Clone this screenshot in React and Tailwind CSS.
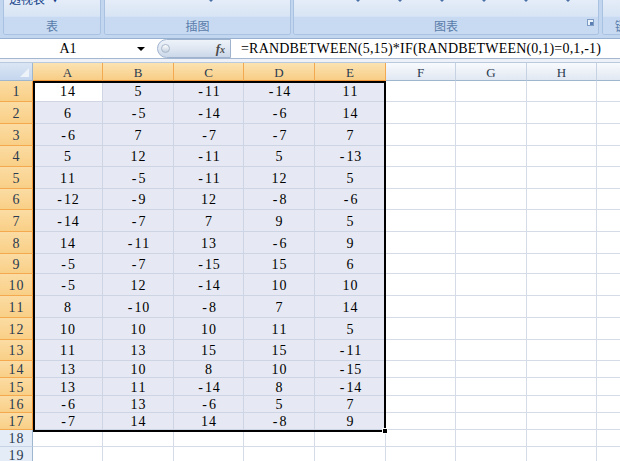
import React from "react";

const data = [
  [14, 5, -11, -14, 11],
  [6, -5, -14, -6, 14],
  [-6, 7, -7, -7, 7],
  [5, 12, -11, 5, -13],
  [11, -5, -11, 12, 5],
  [-12, -9, 12, -8, -6],
  [-14, -7, 7, 9, 5],
  [14, -11, 13, -6, 9],
  [-5, -7, -15, 15, 6],
  [-5, 12, -14, 10, 10],
  [8, -10, -8, 7, 14],
  [10, 10, 10, 11, 5],
  [11, 13, 15, 15, -11],
  [13, 10, 8, 10, -15],
  [13, 11, -14, 8, -14],
  [-6, 13, -6, 5, 7],
  [-7, 14, 14, -8, 9],
];

const rowH = [21, 22, 22, 21, 22, 21, 22, 22, 20, 22, 22, 22, 21, 17, 18, 17, 17, 17, 17];
const colW = [70, 71, 70, 71, 71, 70, 71, 70, 70];
const cols = ["A", "B", "C", "D", "E", "F", "G", "H", "I"];

const serif = { fontFamily: '"Liberation Serif", "Times New Roman", serif' };
const cjk = { fontFamily: '"Noto Sans CJK SC", "Noto Sans", sans-serif' };

// fixed-pitch rendering of digits (the reference uses a fixed-pitch serif face)
function M({ text }) {
  return (
    <span className="inline-flex whitespace-nowrap" style={serif}>
      {String(text)
        .split("")
        .map((ch, i) => (
          <span key={i} className="inline-block w-[7.8px] text-center">
            {ch}
          </span>
        ))}
    </span>
  );
}

function Panel({ width, label, children }) {
  return (
    <div
      className="h-[35px] shrink-0 rounded-b-[3px] border border-t-0 border-[#a9c2e2] overflow-hidden flex flex-col bg-[#dce7f5]"
      style={{ width }}
    >
      <div className="h-[16px] relative bg-gradient-to-b from-[#e4edf8] to-[#d9e5f4]">{children}</div>
      <div
        className="flex-1 bg-[#c7daf1] border-t border-[#d3e2f4] flex items-center justify-center text-[12px] leading-none text-[#5a7cab]"
        style={cjk}
      >
        <span>{label}</span>
      </div>
    </div>
  );
}

function Tiny() {
  return <div className="w-0 h-0 border-l-[2px] border-r-[2px] border-t-[2px] border-l-transparent border-r-transparent border-t-[#4a6fa5]" />;
}

function Ribbon() {
  return (
    <div className="h-[39px] bg-[#c2d6ef] border-b border-[#97b1d2] flex items-start pl-[3px] gap-[3px] overflow-hidden">
      <Panel width={98} label="表">
        <div className="flex items-center gap-[6px] pl-[5px] -mt-[8px] text-[12px] leading-[14px] text-[#15428b]" style={cjk}>
          <span>透视表</span>
          <span className="text-[8px]">▼</span>
        </div>
      </Panel>
      <Panel width={187} label="插图">
        <div className="absolute left-[104px] top-0">
          <Tiny />
        </div>
      </Panel>
      <div className="-ml-[1px]">
        <Panel width={306} label="图表">
          <div className="flex pl-[62px] gap-[38px]">
            <Tiny />
            <Tiny />
            <Tiny />
            <Tiny />
            <Tiny />
            <Tiny />
          </div>
          <div className="absolute right-[4px] top-[19px] w-[7px] h-[7px] border border-[#7f9cc4] bg-[#e8f0fa] flex items-end justify-end">
            <div className="w-[3px] h-[3px] bg-[#5b7fb0]" />
          </div>
        </Panel>
      </div>
      <Panel width={50} label="链接" />
    </div>
  );
}

function FormulaBar() {
  return (
    <div className="h-[20px] flex bg-white border-b border-[#a3b7d1]">
      <div className="w-[157px] flex items-center">
        <div className="w-[136px] text-center text-[14px] leading-none text-black" style={serif}>
          A1
        </div>
        <div className="w-0 h-0 border-l-[4px] border-r-[4px] border-t-[4px] border-l-transparent border-r-transparent border-t-black ml-[1px]" />
      </div>
      <div className="w-[74px] h-[19px] rounded-l-[10px] border border-[#9fb3cf] bg-gradient-to-b from-[#eef3f9] via-[#dfe7f2] to-[#cbd8e9] flex items-center justify-between pl-[3px] pr-[5px]">
        <div className="w-[9px] h-[9px] rounded-full bg-gradient-to-b from-[#ffffff] to-[#c3cfde] border border-[#a8b7ca]" />
        <span className="text-[13px] italic font-bold text-[#4b4b4b] leading-none" style={serif}>
          f<span className="text-[10px]">x</span>
        </span>
      </div>
      <div
        className="flex-1 flex items-center pl-[10px] text-[14px] leading-none tracking-[0.2px] text-black whitespace-nowrap overflow-hidden"
        style={serif}
      >
        =RANDBETWEEN(5,15)*IF(RANDBETWEEN(0,1)=0,1,-1)
      </div>
    </div>
  );
}

function Grid() {
  return (
    <div className="relative">
      <div className="flex h-[18px]">
        <div className="w-[33px] shrink-0 relative bg-gradient-to-b from-[#dbe6f4] to-[#c4d6ee] border-r border-b border-[#9eb6ce]">
          <div className="absolute right-[3px] bottom-[3px] w-0 h-0 border-l-[9px] border-l-transparent border-b-[9px] border-b-[#eef3fa]" />
        </div>
        {cols.map((c, i) => {
          const sel = i < 5;
          return (
            <div
              key={c}
              className={
                "shrink-0 flex items-center justify-center pt-[1px] text-[13px] leading-none border-r border-b text-[#2a3a50] " +
                (sel
                  ? "bg-gradient-to-b from-[#fbe3b2] to-[#f8cd85] border-r-[#f2a94f] border-b-[#f29536]"
                  : "bg-gradient-to-b from-[#f8fafd] to-[#e1e8f2] border-r-[#c6d2e2] border-b-[#9eb6ce]")
              }
              style={{ width: colW[i], ...serif }}
            >
              {c}
            </div>
          );
        })}
      </div>
      {rowH.map((h, r) => {
        const selRow = r < 17;
        return (
          <div key={r} className="flex" style={{ height: h }}>
            <div
              className={
                "w-[33px] shrink-0 flex items-center justify-center pt-[2px] text-[14px] leading-none border-r border-b text-[#2a3a50] " +
                (selRow
                  ? "bg-gradient-to-b from-[#fbdca3] to-[#f9cf86] border-r-[#f29536] border-b-[#f4a94e]"
                  : "bg-[#e4ecf7] border-r-[#9eb6ce] border-b-[#c5d3e4]")
              }
            >
              <M text={r + 1} />
            </div>
            {cols.map((c, i) => {
              const inSel = selRow && i < 5;
              const active = r === 0 && i === 0;
              return (
                <div
                  key={c}
                  className={
                    "shrink-0 flex items-center justify-center pt-[2px] text-[14px] leading-none text-black border-r border-b " +
                    (active
                      ? "bg-white border-[#cfd5e3]"
                      : inSel
                      ? "bg-[#e6e9f3] border-[#cdd4e3]"
                      : "bg-white border-[#d5dce8]")
                  }
                  style={{ width: colW[i] }}
                >
                  {inSel ? <M text={data[r][i]} /> : null}
                </div>
              );
            })}
          </div>
        );
      })}
      <div className="absolute left-[33px] top-[18px] w-[353px] h-[351px] border-2 border-black pointer-events-none" />
      <div className="absolute left-[382px] top-[365px] w-[6px] h-[6px] bg-black border border-white" />
    </div>
  );
}

export default function App() {
  return (
    <div className="w-[620px] h-[461px] overflow-hidden bg-white">
      <Ribbon />
      <FormulaBar />
      <div className="h-[4px] bg-[#eef2f8] border-b border-[#b9c9de]" />
      <Grid />
    </div>
  );
}
